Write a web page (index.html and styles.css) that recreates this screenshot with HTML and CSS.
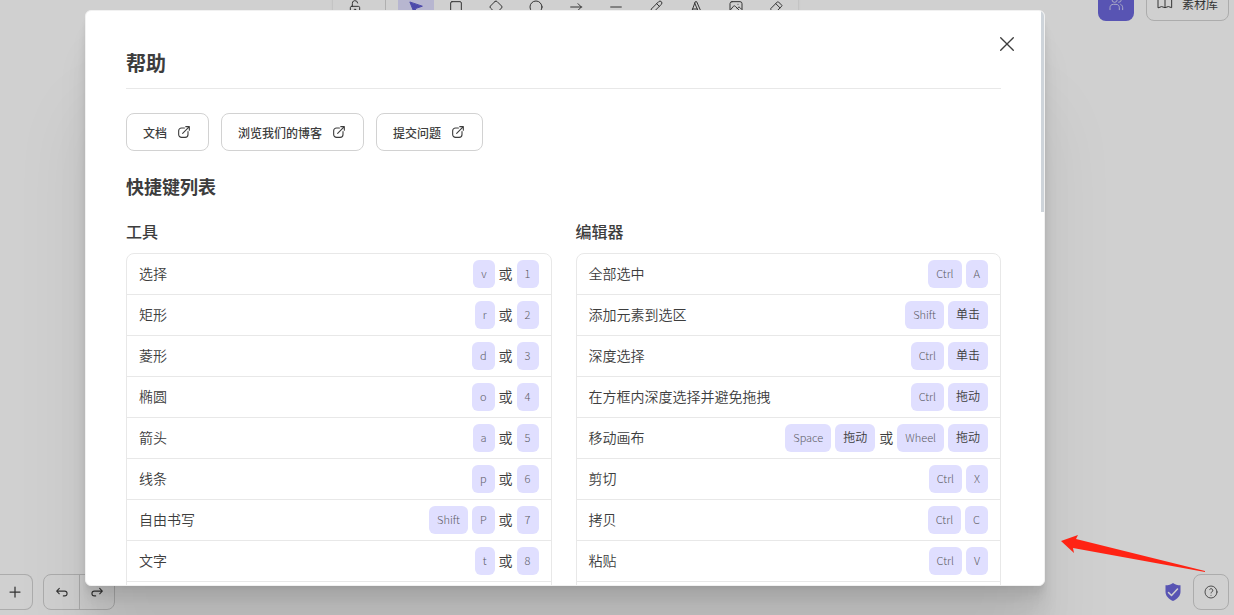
FILE: index.html
```html
<!DOCTYPE html>
<html lang="zh-CN">
    <head>
        <meta charset="UTF-8" />
        <meta name="viewport" content="width=device-width, initial-scale=1.0" />
        <title>帮助</title>
        <link rel="stylesheet" href="styles.css">
    </head>
    <body>
        <svg class="sprite" aria-hidden="true">
            <symbol id="external" viewBox="-1 -1 18 18">
                <path d="M8.500 3.500H5.200A3.200 3.200 0 0 0 2 6.700v4.100A3.200 3.200 0 0 0 5.200 14h4.100a3.200 3.200 0 0 0 3.200-3.200V7.500M6.500 9.500 14 2M10 2h4v4" />
            </symbol>
        </svg>

        <div class="app">
            <header class="top">
                <div class="toolbar">
                    <button class="tool"><svg viewBox="0 0 24 24"><rect x="5" y="11" width="14" height="10" rx="2" /><circle cx="12" cy="16" r="1" /><path d="M8 11V7a4 4 0 0 1 8-1" /></svg></button>
                    <span class="divider"></span>
                    <button class="tool selected"><svg class="solid" viewBox="0 0 24 24"><path d="M3 5l6 15 3-6 9-3z" /></svg></button>
                    <button class="tool"><svg viewBox="0 0 24 24"><rect x="4" y="4" width="16" height="16" rx="2" /></svg></button>
                    <button class="tool"><svg viewBox="0 0 24 24"><path d="M10.500 3.700 3.700 10.500a2 2 0 0 0 0 3l6.800 6.800a2 2 0 0 0 3 0l6.800-6.800a2 2 0 0 0 0-3l-6.800-6.800a2 2 0 0 0-3 0z" /></svg></button>
                    <button class="tool"><svg viewBox="0 0 24 24"><circle cx="12" cy="12" r="9" /></svg></button>
                    <button class="tool"><svg viewBox="0 0 24 24"><path d="M4 12h16M15 17l5-5M15 7l5 5" /></svg></button>
                    <button class="tool"><svg viewBox="0 0 24 24"><path d="M4 12h16" /></svg></button>
                    <button class="tool"><svg viewBox="0 0 24 24"><path d="M4 20l1-5L16 4a2.800 2.800 0 0 1 4 4L9 19zM13 7l4 4" /></svg></button>
                    <button class="tool"><svg viewBox="0 0 24 24"><path d="M4 20h3M14 20h7M7 15h7M10 6l6 14M5 20 11 4h2l7 16" /></svg></button>
                    <button class="tool"><svg viewBox="0 0 24 24"><rect x="3" y="4" width="18" height="17" rx="3" /><path d="M15 8h.01M4 16l4-5c1-1 2-1 3 0l5 5M14 14l1-1c1-1 2-1 3 0l2 2" /></svg></button>
                    <button class="tool"><svg viewBox="0 0 24 24"><path d="M19 20H8.500L4.200 15.700a1 1 0 0 1 0-1.400l10-10a1 1 0 0 1 1.400 0l5 5a1 1 0 0 1 0 1.400L11.500 20M18 13.300 11.700 7" /></svg></button>
                </div>
                <div class="top-right">
                    <button class="share"><svg viewBox="0 0 24 24"><circle cx="10" cy="7" r="4" /><path d="M3 22v-3c0-3 2-5 5-5h4c3 0 5 2 5 5v3M16 3a4 4 0 0 1 0 8M19 14c2 1 3 3 3 5v3" /></svg></button>
                    <button class="library">
                        <svg viewBox="0 0 24 24"><path d="M2 19a9 9 0 0 1 10 0 9 9 0 0 1 10 0V5a9 9 0 0 0-10 0A9 9 0 0 0 2 5zM12 5v14" /></svg>
                        素材库
                    </button>
                </div>
            </header>

            <footer class="bottom">
                <button class="zoom-in"><svg viewBox="0 0 16 16"><path d="M8 3v10M3 8h10" /></svg></button>
                <div class="history">
                    <button><svg viewBox="0 0 18 18"><path d="M6 11 3 8l3-3M3 8h9a2.700 2.700 0 0 1 0 5.400h-1.500" /></svg></button>
                    <button><svg viewBox="0 0 18 18"><path d="m12 11 3-3-3-3M15 8H6a2.700 2.700 0 0 0 0 5.400h1.500" /></svg></button>
                </div>
                <svg class="shield" viewBox="0 0 16 20"><path class="shield-body" d="M8 1c2 1.500 4.500 2.300 7.500 2.300v6.500c0 4-3 7.200-7.500 9.200-4.500-2-7.500-5.200-7.500-9.200V3.300C3.500 3.300 6 2.500 8 1z" /><path class="shield-check" d="m3.500 10.500 3 3 6-6.500" /></svg>
                <button class="help"><svg viewBox="0 0 24 24"><circle cx="12" cy="12" r="9" /><path d="M12 17v.01M12 13.500a1.500 1.500 0 0 1 1-1.500 2.600 2.600 0 1 0-3-4" /></svg></button>
            </footer>
        </div>

        <div class="overlay">
            <div class="modal" role="dialog" aria-labelledby="title">
                <button class="close"><svg viewBox="0 0 20 20"><path d="M3 3l14 14M17 3 3 17" /></svg></button>
                <span class="scroll-thumb"></span>
                <div class="content">
                    <h1 id="title">帮助</h1>
                    <div class="links">
                        <a href="#">文档 <svg><use href="#external" /></svg></a>
                        <a href="#">浏览我们的博客 <svg><use href="#external" /></svg></a>
                        <a href="#">提交问题 <svg><use href="#external" /></svg></a>
                    </div>
                    <h2>快捷键列表</h2>
                    <div class="columns">
                        <section>
                            <h3>工具</h3>
                            <div class="island">
                                <div class="row">选择 <div class="keys"><kbd>v</kbd>或<kbd>1</kbd></div></div>
                                <div class="row">矩形 <div class="keys"><kbd>r</kbd>或<kbd>2</kbd></div></div>
                                <div class="row">菱形 <div class="keys"><kbd>d</kbd>或<kbd>3</kbd></div></div>
                                <div class="row">椭圆 <div class="keys"><kbd>o</kbd>或<kbd>4</kbd></div></div>
                                <div class="row">箭头 <div class="keys"><kbd>a</kbd>或<kbd>5</kbd></div></div>
                                <div class="row">线条 <div class="keys"><kbd>p</kbd>或<kbd>6</kbd></div></div>
                                <div class="row">自由书写 <div class="keys"><kbd>Shift</kbd><kbd>P</kbd>或<kbd>7</kbd></div></div>
                                <div class="row">文字 <div class="keys"><kbd>t</kbd>或<kbd>8</kbd></div></div>
                            </div>
                        </section>
                        <section>
                            <h3>编辑器</h3>
                            <div class="island">
                                <div class="row">全部选中 <div class="keys"><kbd>Ctrl</kbd><kbd>A</kbd></div></div>
                                <div class="row">添加元素到选区 <div class="keys"><kbd>Shift</kbd><kbd class="zh">单击</kbd></div></div>
                                <div class="row">深度选择 <div class="keys"><kbd>Ctrl</kbd><kbd class="zh">单击</kbd></div></div>
                                <div class="row">在方框内深度选择并避免拖拽 <div class="keys"><kbd>Ctrl</kbd><kbd class="zh">拖动</kbd></div></div>
                                <div class="row">移动画布 <div class="keys"><kbd>Space</kbd><kbd class="zh">拖动</kbd>或<kbd>Wheel</kbd><kbd class="zh">拖动</kbd></div></div>
                                <div class="row">剪切 <div class="keys"><kbd>Ctrl</kbd><kbd>X</kbd></div></div>
                                <div class="row">拷贝 <div class="keys"><kbd>Ctrl</kbd><kbd>C</kbd></div></div>
                                <div class="row">粘贴 <div class="keys"><kbd>Ctrl</kbd><kbd>V</kbd></div></div>
                            </div>
                        </section>
                    </div>
                </div>
            </div>
        </div>

        <svg class="arrow" viewBox="0 0 146 40"><path d="M1 9 18 3l-2 4 129 32v1L13 16l1 5z" /></svg>
    </body>
</html>
```
FILE: styles.css
```css
* {
    box-sizing: border-box;
}

body,
html {
    margin: 0;
    height: 100%;
    overflow: hidden;
}

body {
    font-family: "Noto Sans CJK SC", "Noto Sans", sans-serif;
    font-size: 14px;
    color: #3d3d3d;
    background: #ffffff;
}

button {
    display: flex;
    align-items: center;
    justify-content: center;
    height: 36px;
    min-width: 36px;
    padding: 0;
    border: 0;
    border-radius: 8px;
    background: none;
    color: inherit;
    font: inherit;
    cursor: pointer;
}

svg {
    width: 16px;
    height: 16px;
    flex: none;
    fill: none;
    stroke: currentColor;
    stroke-width: 1.5;
    stroke-linecap: round;
    stroke-linejoin: round;
}

.sprite {
    display: none;
}

/* canvas behind the dialog */
.app {
    display: flex;
    flex-direction: column;
    justify-content: space-between;
    height: 100%;
}

.top {
    display: flex;
    align-items: flex-start;
    margin-top: -15px;
    padding: 0 5px 0 333px;
}

.toolbar {
    display: flex;
    align-items: center;
    gap: 4px;
    padding: 4px;
    border-radius: 8px;
    box-shadow: 0 0 1px rgba(0, 0, 0, 0.2), 0 0 3px rgba(0, 0, 0, 0.1);
}

.divider {
    width: 1px;
    height: 24px;
    margin: 0 8px;
    background: #d6d6d6;
}

.selected {
    background: #e0dfff;
    color: #5b57d1;
}

.solid {
    fill: currentColor;
}

.top-right {
    display: flex;
    gap: 12px;
    margin-left: auto;
}

.share {
    background: #6965db;
    color: #d2d1f4;
}

.library {
    gap: 9px;
    padding: 0 10px;
    border: 1px solid #d2d2d2;
    font-size: 12px;
}

.bottom {
    display: flex;
    align-items: center;
    padding: 0 5px 5px 0;
}

.bottom button svg {
    stroke-width: 1.25;
}

.zoom-in {
    width: 33px;
    min-width: 0;
    padding-right: 2px;
    border: 1px solid #d2d2d2;
    border-left: 0;
    border-radius: 0 8px 8px 0;
}

.history {
    display: flex;
    margin-left: 10px;
    border: 1px solid #d2d2d2;
    border-radius: 8px;
}

.history button {
    height: 34px;
    min-width: 35px;
}

.history button + button {
    border-left: 1px solid #d2d2d2;
    border-radius: 0;
}

.shield {
    width: 16px;
    height: 20px;
    margin-left: auto;
}

.shield-body {
    fill: #6965db;
    stroke: none;
}

.shield-check {
    stroke: #ffffff;
}

.help {
    margin-left: 12px;
    border: 1px solid #d2d2d2;
}

/* dialog */
.overlay {
    position: absolute;
    inset: 0;
    display: flex;
    padding: 10px 189px 29px 85px;
    background: rgba(18, 18, 18, 0.2);
}

.modal {
    position: relative;
    flex: 1;
    overflow: hidden;
    border: 1px solid #f1f1f1;
    border-radius: 6px;
    background: #ffffff;
    box-shadow: 0 100px 80px rgba(0, 0, 0, 0.07),
        0 42px 33px rgba(0, 0, 0, 0.05),
        0 22px 18px rgba(0, 0, 0, 0.04),
        0 13px 10px rgba(0, 0, 0, 0.04),
        0 7px 5px rgba(0, 0, 0, 0.03),
        0 3px 2px rgba(0, 0, 0, 0.02);
}

.close {
    position: absolute;
    top: 15px;
    right: 19px;
}

.close svg {
    width: 18px;
    height: 18px;
}

.scroll-thumb {
    position: absolute;
    top: 0;
    right: 0;
    width: 3px;
    height: 201px;
    background: #ced4da;
}

.content {
    padding: 40px 43px 0 40px;
}

h1,
h2,
h3 {
    margin: 0;
    font-weight: 700;
}

h1 {
    padding-bottom: 14px;
    border-bottom: 1px solid #e8e8e8;
    font-size: 20px;
    line-height: 23px;
}

.links {
    display: flex;
    gap: 12px;
    margin: 24px 0 23px;
}

.links a {
    display: flex;
    align-items: center;
    gap: 9px;
    height: 38px;
    padding: 0 16px;
    border: 1px solid #d2d2d2;
    border-radius: 8px;
    color: inherit;
    font-size: 12px;
    font-weight: 500;
    text-decoration: none;
}

.links svg {
    stroke-width: 1.25;
}

h2 {
    margin-bottom: 23px;
    font-size: 18px;
    line-height: 24px;
}

h3 {
    margin-bottom: 12px;
    font-size: 16px;
    font-weight: 500;
    line-height: 20px;
}

.columns {
    display: flex;
    gap: 24px;
}

.columns section {
    flex: 1;
}

.island {
    padding-bottom: 24px;
    border: 1px solid #e8e8e8;
    border-radius: 8px;
}

.row {
    display: flex;
    justify-content: space-between;
    height: 41px;
    padding: 6px 12px;
    border-bottom: 1px solid #e8e8e8;
    font-weight: 350;
    line-height: 26px;
}

.keys {
    display: flex;
    gap: 4px;
}

kbd {
    height: 28px;
    padding: 0 8px;
    border-radius: 6px;
    background: #e0dfff;
    color: #5c5c64;
    font-family: inherit;
    font-size: 11px;
    font-weight: 300;
    line-height: 27px;
}

.zh {
    color: #3d3d3d;
    font-size: 12px;
    font-weight: 350;
    line-height: 26px;
}

/* red pointer to the help button */
.arrow {
    position: absolute;
    right: 28px;
    bottom: 43px;
    width: 146px;
    height: 40px;
    fill: #ff2314;
    stroke: none;
}
```
